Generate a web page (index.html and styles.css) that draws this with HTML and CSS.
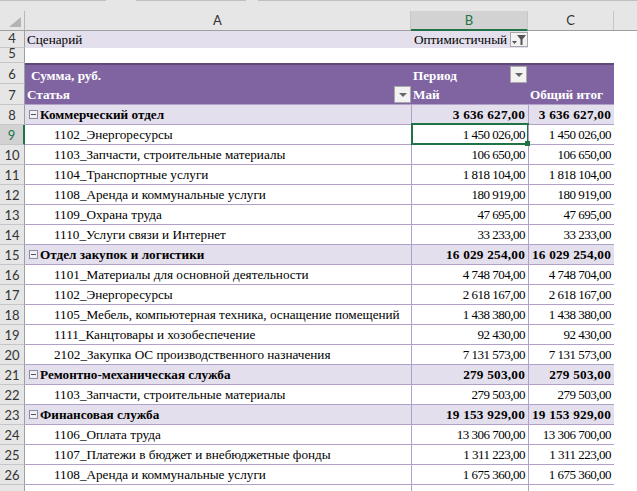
FILE: index.html
```html
<!DOCTYPE html>
<html lang="ru">
<head>
  <meta charset="UTF-8" />
  <title>Сводная таблица</title>
  <link rel="stylesheet" href="styles.css">
</head>
<body>
  <div class="top-strip">
    <span class="seg seg-1"></span>
    <span class="seg seg-2"></span>
    <span class="seg seg-3"></span>
  </div>
  <div class="sheet">
    <div class="head-row">
      <div class="corner"><svg width="24" height="19" viewBox="0 0 24 19"><path d="M21 6V16H9z" fill="#b4b4b4"/></svg></div>
      <div class="col-head col-a">A</div>
      <div class="col-head col-b">B</div>
      <div class="col-head col-c">C</div>
      <div class="col-head col-rest"></div>
    </div>

    <div class="row h17">
      <div class="num">4</div>
      <div class="cell col-a filter-bg">Сценарий</div>
      <div class="cell col-b filter-bg filter-value">Оптимистичный
        <span class="drop drop-filter"><svg width="16" height="14" viewBox="0 0 16 14"><path d="M1 8h5L3.500 11z" fill="#555"/><path d="M6 2h9l-3.500 4.500V12h-2V6.500z" fill="#555"/></svg></span>
      </div>
    </div>
    <div class="row h15">
      <div class="num">5</div>
    </div>
    <div class="row h21 top-line">
      <div class="num">6</div>
      <div class="cell col-a purple indent-small">Сумма, руб.</div>
      <div class="cell col-b purple">Период<span class="drop drop-period"><svg width="10" height="6" viewBox="0 0 10 6"><path d="M1 1h8L5 5z" fill="#666"/></svg></span></div>
      <div class="cell col-c purple"></div>
    </div>
    <div class="row h21 bottom-line">
      <div class="num">7</div>
      <div class="cell col-a purple">Статья<span class="drop drop-article"><svg width="10" height="6" viewBox="0 0 10 6"><path d="M1 1h8L5 5z" fill="#666"/></svg></span></div>
      <div class="cell col-b purple">Май</div>
      <div class="cell col-c purple">Общий итог</div>
    </div>

    <div class="row h20 group">
      <div class="num">8</div>
      <div class="cell col-a"><span class="toggle"></span>Коммерческий отдел</div>
      <div class="cell col-b money">3 636 627,00</div>
      <div class="cell col-c money">3 636 627,00</div>
    </div>
    <div class="row h20 item">
      <div class="num active">9</div>
      <div class="cell col-a">1102_Энергоресурсы</div>
      <div class="cell col-b money selected">1 450 026,00</div>
      <div class="cell col-c money">1 450 026,00</div>
    </div>
    <div class="row h20 item">
      <div class="num">10</div>
      <div class="cell col-a">1103_Запчасти, строительные материалы</div>
      <div class="cell col-b money">106 650,00</div>
      <div class="cell col-c money">106 650,00</div>
    </div>
    <div class="row h20 item">
      <div class="num">11</div>
      <div class="cell col-a">1104_Транспортные услуги</div>
      <div class="cell col-b money">1 818 104,00</div>
      <div class="cell col-c money">1 818 104,00</div>
    </div>
    <div class="row h20 item">
      <div class="num">12</div>
      <div class="cell col-a">1108_Аренда и коммунальные услуги</div>
      <div class="cell col-b money">180 919,00</div>
      <div class="cell col-c money">180 919,00</div>
    </div>
    <div class="row h20 item">
      <div class="num">13</div>
      <div class="cell col-a">1109_Охрана труда</div>
      <div class="cell col-b money">47 695,00</div>
      <div class="cell col-c money">47 695,00</div>
    </div>
    <div class="row h20 item">
      <div class="num">14</div>
      <div class="cell col-a">1110_Услуги связи и Интернет</div>
      <div class="cell col-b money">33 233,00</div>
      <div class="cell col-c money">33 233,00</div>
    </div>
    <div class="row h20 group">
      <div class="num">15</div>
      <div class="cell col-a"><span class="toggle"></span>Отдел закупок и логистики</div>
      <div class="cell col-b money">16 029 254,00</div>
      <div class="cell col-c money">16 029 254,00</div>
    </div>
    <div class="row h20 item">
      <div class="num">16</div>
      <div class="cell col-a">1101_Материалы для основной деятельности</div>
      <div class="cell col-b money">4 748 704,00</div>
      <div class="cell col-c money">4 748 704,00</div>
    </div>
    <div class="row h20 item">
      <div class="num">17</div>
      <div class="cell col-a">1102_Энергоресурсы</div>
      <div class="cell col-b money">2 618 167,00</div>
      <div class="cell col-c money">2 618 167,00</div>
    </div>
    <div class="row h20 item">
      <div class="num">18</div>
      <div class="cell col-a">1105_Мебель, компьютерная техника, оснащение помещений</div>
      <div class="cell col-b money">1 438 380,00</div>
      <div class="cell col-c money">1 438 380,00</div>
    </div>
    <div class="row h20 item">
      <div class="num">19</div>
      <div class="cell col-a">1111_Канцтовары и хозобеспечение</div>
      <div class="cell col-b money">92 430,00</div>
      <div class="cell col-c money">92 430,00</div>
    </div>
    <div class="row h20 item">
      <div class="num">20</div>
      <div class="cell col-a">2102_Закупка ОС производственного назначения</div>
      <div class="cell col-b money">7 131 573,00</div>
      <div class="cell col-c money">7 131 573,00</div>
    </div>
    <div class="row h20 group">
      <div class="num">21</div>
      <div class="cell col-a"><span class="toggle"></span>Ремонтно-механическая служба</div>
      <div class="cell col-b money">279 503,00</div>
      <div class="cell col-c money">279 503,00</div>
    </div>
    <div class="row h20 item">
      <div class="num">22</div>
      <div class="cell col-a">1103_Запчасти, строительные материалы</div>
      <div class="cell col-b money">279 503,00</div>
      <div class="cell col-c money">279 503,00</div>
    </div>
    <div class="row h20 group">
      <div class="num">23</div>
      <div class="cell col-a"><span class="toggle"></span>Финансовая служба</div>
      <div class="cell col-b money">19 153 929,00</div>
      <div class="cell col-c money">19 153 929,00</div>
    </div>
    <div class="row h20 item">
      <div class="num">24</div>
      <div class="cell col-a">1106_Оплата труда</div>
      <div class="cell col-b money">13 306 700,00</div>
      <div class="cell col-c money">13 306 700,00</div>
    </div>
    <div class="row h20 item">
      <div class="num">25</div>
      <div class="cell col-a">1107_Платежи в бюджет и внебюджетные фонды</div>
      <div class="cell col-b money">1 311 223,00</div>
      <div class="cell col-c money">1 311 223,00</div>
    </div>
    <div class="row h20 item">
      <div class="num">26</div>
      <div class="cell col-a">1108_Аренда и коммунальные услуги</div>
      <div class="cell col-b money">1 675 360,00</div>
      <div class="cell col-c money">1 675 360,00</div>
    </div>
    <div class="row h20 last-row">
      <div class="num"></div>
      <div class="cell col-a"></div>
      <div class="cell col-b money"></div>
      <div class="cell col-c money"></div>
    </div>
  </div>
</body>
</html>
```

FILE: styles.css
```css
* {
  box-sizing: border-box;
}
html,
body {
  margin: 0;
  height: 100%;
  overflow: hidden;
}
body {
  width: 637px;
  height: 491px;
  background-color: #fff;
  font-family: "Liberation Serif", serif;
  font-size: 13.2px;
  color: #000;
}
.top-strip {
  display: flex;
  height: 11px;
  background-color: #e6e6e6;
}
.seg {
  height: 1px;
  background-color: #c0c0c0;
}
.seg-1 {
  width: 106px;
  margin-right: 30px;
}
.seg-2 {
  width: 110px;
  margin-right: 12px;
}
.seg-3 {
  flex: 1;
}
.head-row {
  display: flex;
  height: 20px;
  background-color: #e6e6e6;
  border-bottom: 1px solid #9f9f9f;
}
.corner {
  width: 25px;
  flex: none;
  border-right: 1px solid #b8b8b8;
}
.corner svg {
  display: block;
}
.col-head {
  font-family: Lato, sans-serif;
  font-size: 13px;
  line-height: 19px;
  text-align: center;
  color: #333;
  border-right: 1px solid #c6c6c6;
}
.col-a {
  width: 386px;
  flex: none;
}
.col-b {
  width: 117px;
  flex: none;
}
.col-c {
  width: 86px;
  flex: none;
}
.col-rest {
  flex: 1;
  border-right: none;
}
.col-head.col-b {
  background-color: #d2d2d2;
  border-bottom: 2px solid #217346;
  height: 20px;
  color: #217346;
}
.row {
  display: flex;
}
.h15 {
  height: 15px;
}
.h17 {
  height: 17px;
}
.h20 {
  height: 20px;
}
.h21 {
  height: 21px;
}
.num {
  display: flex;
  align-items: flex-end;
  justify-content: center;
  width: 25px;
  flex: none;
  background-color: #e6e6e6;
  border-right: 1px solid #9f9f9f;
  border-bottom: 1px solid #c6c6c6;
  font-family: Lato, sans-serif;
  font-size: 13px;
  color: #333;
  line-height: 17px;
}
.num.active {
  background-color: #d2d2d2;
  border-right: 2px solid #217346;
  color: #217346;
}
.cell {
  position: relative;
  white-space: nowrap;
  line-height: 18px;
  padding: 0 2px;
}
.filter-bg {
  background-color: #e4dfec;
}
.filter-value {
  padding-left: 3px;
}
.purple {
  background-color: #8064a2;
  color: #fff;
  font-weight: bold;
  padding-top: 2px;
}
.top-line .purple {
  border-top: 2px solid #60497a;
  padding-top: 2px;
}
.bottom-line .purple {
  border-bottom: 1px solid #b1a0c7;
}
.indent-small {
  padding-left: 6px;
}
.group .cell,
.item .cell {
  line-height: 19px;
  border-bottom: 1px solid #b1a0c7;
}
.group .cell {
  background-color: #e4dfec;
  font-weight: bold;
}
.cell.money {
  text-align: right;
  padding-right: 3px;
  border-left: 1px solid #b1a0c7;
  font-size: 13px;
  letter-spacing: -0.5px;
}
.group .cell.money {
  font-size: 13.3px;
  letter-spacing: 0.2px;
}
.item .col-a {
  padding-left: 29px;
}
.group .col-a {
  display: flex;
  align-items: center;
  gap: 2px;
  padding-left: 4px;
}
.toggle {
  display: block;
  width: 9px;
  height: 9px;
  flex: none;
  border: 1px solid #8c8ca0;
  background-color: #f0f0f4;
  position: relative;
}
.toggle::after {
  content: "";
  position: absolute;
  left: 1px;
  right: 1px;
  top: 3px;
  height: 1px;
  background-color: #555;
}
.drop {
  position: absolute;
  background-color: #f2f2f2;
  border: 1px solid #a8a8a8;
  display: flex;
  align-items: center;
  justify-content: center;
}
.drop-filter {
  width: 18px;
  height: 15px;
  right: 0;
  top: 1px;
}
.drop-period {
  width: 17px;
  height: 17px;
  right: 1px;
  top: 1px;
}
.drop-article {
  width: 17px;
  height: 17px;
  right: 0;
  top: 2px;
}
.selected::before {
  content: "";
  position: absolute;
  left: -1px;
  right: -1px;
  top: -2px;
  bottom: -1px;
  border: 2px solid #217346;
}
.selected::after {
  content: "";
  position: absolute;
  right: -2px;
  bottom: -2px;
  width: 5px;
  height: 5px;
  background-color: #217346;
  z-index: 2;
}
```
